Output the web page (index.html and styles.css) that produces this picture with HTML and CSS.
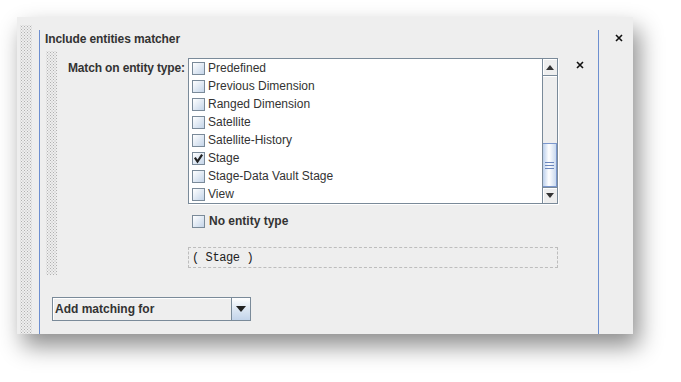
FILE: index.html
```html
<!DOCTYPE html>
<html>
<head>
<meta charset="utf-8">
<link rel="stylesheet" href="styles.css">
</head>
<body>
<div class="page">
<div class="panel">
  <div class="grip grip-outer"></div>
  <div class="section">
    <div class="title">Include entities matcher</div>
    <div class="body">
      <div class="grip grip-inner"></div>
      <div class="form">
        <div class="label">Match on entity type:</div>
        <div class="field">
          <div class="list">
            <div class="items">
              <div class="item"><span class="cb"></span>Predefined</div>
              <div class="item"><span class="cb"></span>Previous Dimension</div>
              <div class="item"><span class="cb"></span>Ranged Dimension</div>
              <div class="item"><span class="cb"></span>Satellite</div>
              <div class="item"><span class="cb"></span>Satellite-History</div>
              <div class="item"><span class="cb checked"><svg width="11" height="11" viewBox="0 0 11 11"><path d="M2.5 5.5 L4.5 8.5 L8.5 2.5" fill="none" stroke="#222" stroke-width="2.2" stroke-linecap="square"/></svg></span>Stage</div>
              <div class="item"><span class="cb"></span>Stage-Data Vault Stage</div>
              <div class="item"><span class="cb"></span>View</div>
            </div>
            <div class="scrollbar">
              <div class="sb-btn"><svg width="8" height="5" viewBox="0 0 8 5"><path d="M0 5 L4 0 L8 5Z" fill="#333"/></svg></div>
              <div class="sb-track"></div>
              <div class="sb-thumb"><span></span><span></span><span></span></div>
              <div class="sb-btn down"><svg width="8" height="5" viewBox="0 0 8 5"><path d="M0 0 L4 5 L8 0Z" fill="#333"/></svg></div>
            </div>
          </div>
          <div class="noentity"><span class="cb"></span>No entity type</div>
          <div class="expr">( Stage )</div>
        </div>
        <div class="remove"><svg width="8" height="8" viewBox="0 0 8 8"><path d="M1 1 L7 7 M7 1 L1 7" stroke="#111" stroke-width="1.6"/></svg></div>
      </div>
    </div>
    <div class="combo">
      <div class="combo-text">Add matching for</div>
      <div class="combo-btn"><svg width="10" height="6" viewBox="0 0 10 6"><path d="M0 0 L5 6 L10 0Z" fill="#222"/></svg></div>
    </div>
  </div>
  <div class="close"><svg width="8" height="8" viewBox="0 0 8 8"><path d="M1 1 L7 7 M7 1 L1 7" stroke="#111" stroke-width="1.6"/></svg></div>
</div>
</div>
</body>
</html>
```

FILE: styles.css
```css
html, body {
  margin: 0;
  padding: 0;
  background: #ffffff;
}
body {
  font-family: "Liberation Sans", Arial, sans-serif;
  font-size: 12px;
  color: #333333;
}
.page {
  height: 382px;
  padding-top: 17px;
  box-sizing: border-box;
  overflow: hidden;
}
.panel {
  margin-left: 17px;
  width: 616px;
  height: 317px;
  background: #eeeeee;
  box-shadow: 6px 12px 22px rgba(0, 0, 0, 0.45);
  display: flex;
  padding-top: 8px;
  box-sizing: border-box;
}
.grip {
  background-image:
    radial-gradient(circle, #b0b0b0 0.5px, transparent 0.7px),
    radial-gradient(circle, #b0b0b0 0.5px, transparent 0.7px);
  background-size: 3px 3px, 3px 3px;
  background-position: 0 0, 1.5px 1.5px;
}
.grip-outer {
  width: 12px;
  margin-left: 3px;
}
.section {
  margin-left: 7px;
  margin-top: 5px;
  width: 558px;
  border-left: 1px solid #6d8fd0;
  border-right: 1px solid #6d8fd0;
  display: flex;
  flex-direction: column;
}
.title {
  height: 18px;
  line-height: 18px;
  padding-left: 5px;
  font-weight: bold;
  letter-spacing: -0.1px;
}
.body {
  display: flex;
  margin-top: 3px;
}
.grip-inner {
  width: 11px;
  margin-left: 6px;
}
.form {
  margin-left: 11px;
  padding-top: 7px;
  padding-bottom: 7px;
  display: flex;
  align-items: flex-start;
}
.label {
  width: 120px;
  font-weight: bold;
  line-height: 18px;
  margin-top: 1px;
  letter-spacing: -0.15px;
}
.field {
  width: 370px;
}
.list {
  height: 146px;
  border: 1px solid #7a8a99;
  box-sizing: border-box;
  background: #ffffff;
  display: flex;
  box-shadow: 1px 1px 0 #ffffff;
}
.items {
  flex: 1;
}
.item {
  height: 18px;
  display: flex;
  align-items: center;
  padding-left: 3px;
}
.cb {
  width: 13px;
  height: 13px;
  box-sizing: border-box;
  border: 1px solid #7a8a99;
  background: linear-gradient(135deg, #ffffff 0%, #dce6f2 60%, #c4d4e8 100%);
  margin-right: 3px;
  display: flex;
  align-items: center;
  justify-content: center;
}
.cb svg {
  display: block;
}
.scrollbar {
  width: 14px;
  border-left: 1px solid #7a8a99;
  display: flex;
  flex-direction: column;
  background: #eeeeee;
}
.sb-btn {
  height: 16px;
  border-bottom: 1px solid #7a8a99;
  background: #eeeeee;
  display: flex;
  align-items: center;
  justify-content: center;
  box-shadow: inset 1px 1px 0 #ffffff;
}
.sb-btn.down {
  border-bottom: none;
  border-top: 1px solid #7a8a99;
  height: 15px;
}
.sb-track {
  flex: 1;
  box-shadow: inset 0 1px 0 #ffffff;
}
.sb-thumb {
  height: 44px;
  box-sizing: border-box;
  border: 1px solid #7b97cd;
  border-left: none;
  background: linear-gradient(90deg, #bcd0ec 0%, #ffffff 45%, #c9d9ef 100%);
  display: flex;
  flex-direction: column;
  align-items: center;
  justify-content: center;
  gap: 2px;
}
.sb-thumb span {
  width: 9px;
  height: 1px;
  background: #6a86bd;
}
.noentity {
  display: flex;
  align-items: center;
  height: 18px;
  margin-top: 8px;
  padding-left: 4px;
  font-weight: bold;
}
.noentity .cb {
  margin-right: 4px;
}
.expr {
  margin-top: 17px;
  height: 21px;
  box-sizing: border-box;
  border: 1px dashed #bdbdbd;
  padding-left: 3px;
  padding-top: 1px;
  line-height: 19px;
  font-family: "Liberation Mono", "Courier New", monospace;
  font-size: 12px;
  letter-spacing: -0.4px;
  color: #222222;
}
.remove {
  margin-left: 18px;
  margin-top: 3px;
}
.remove svg, .close svg {
  display: block;
}
.combo {
  margin-top: 22px;
  margin-left: 12px;
  width: 199px;
  height: 24px;
  box-sizing: border-box;
  border: 1px solid #7a8a99;
  display: flex;
}
.combo-text {
  flex: 1;
  font-weight: bold;
  line-height: 22px;
  padding-left: 2px;
  box-shadow: inset 1px 1px 0 #ffffff;
}
.combo-btn {
  width: 18px;
  border-left: 1px solid #7a8a99;
  background: linear-gradient(180deg, #ffffff 0%, #dde7f3 50%, #c3d4ea 100%);
  display: flex;
  align-items: center;
  justify-content: center;
}
.close {
  margin-left: 16px;
  margin-top: 9px;
}
```
